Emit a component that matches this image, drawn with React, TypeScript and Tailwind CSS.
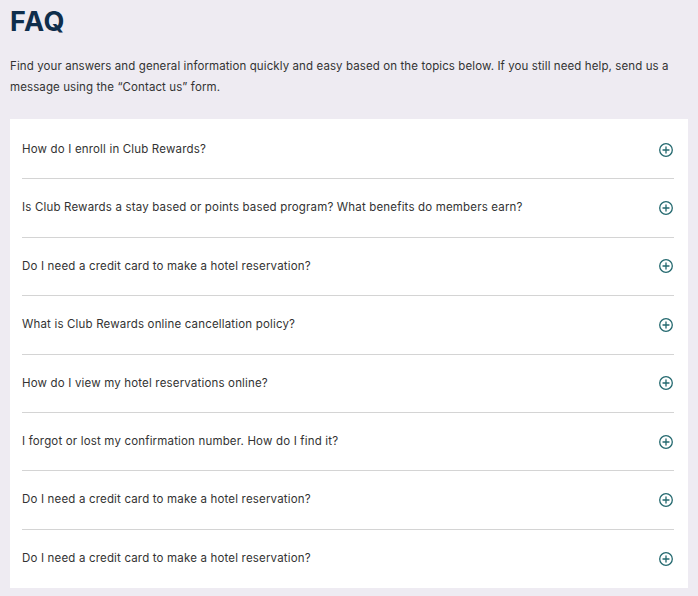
import React from "react";

const questions = [
  "How do I enroll in Club Rewards?",
  "Is Club Rewards a stay based or points based program? What benefits do members earn?",
  "Do I need a credit card to make a hotel reservation?",
  "What is Club Rewards online cancellation policy?",
  "How do I view my hotel reservations online?",
  "I forgot or lost my confirmation number. How do I find it?",
  "Do I need a credit card to make a hotel reservation?",
  "Do I need a credit card to make a hotel reservation?",
];

const PlusCircle = () => (
  <svg width="16" height="16" viewBox="0 0 16 16" fill="none" className="shrink-0">
    <circle cx="8" cy="8" r="6.3" stroke="#24696f" strokeWidth="1.3" />
    <path d="M8 5v6M5 8h6" stroke="#24696f" strokeWidth="1.3" strokeLinecap="round" />
  </svg>
);

export default function App() {
  return (
    <div
      className="min-h-[596px] w-[698px] bg-[#eeebf2] px-[10px] pt-[4px]"
      style={{ fontFamily: "Inter, 'Noto Sans', sans-serif" }}
    >
      <h1 className="text-[27px] font-bold leading-[36px] tracking-[0.6px] text-[#0f2e4c]">FAQ</h1>
      <p className="mt-[16px] text-[11.5px] leading-[20.5px] tracking-[0.1px] text-[#333333]">
        Find your answers and general information quickly and easy based on the topics below. If you still need help, send us a message using the “Contact us” form.
      </p>
      <div className="mt-[22px] bg-white pl-[12px] pr-[14px] pt-[2px]">
        {questions.map((q, i) => (
          <div
            key={i}
            className={`flex h-[58.4px] items-center justify-between ${
              i < questions.length - 1 ? "border-b border-[#d4d4d4]" : ""
            }`}
          >
            <span className="text-[11.5px] tracking-[0.17px] text-[#333333]">{q}</span>
            <PlusCircle />
          </div>
        ))}
      </div>
    </div>
  );
}
